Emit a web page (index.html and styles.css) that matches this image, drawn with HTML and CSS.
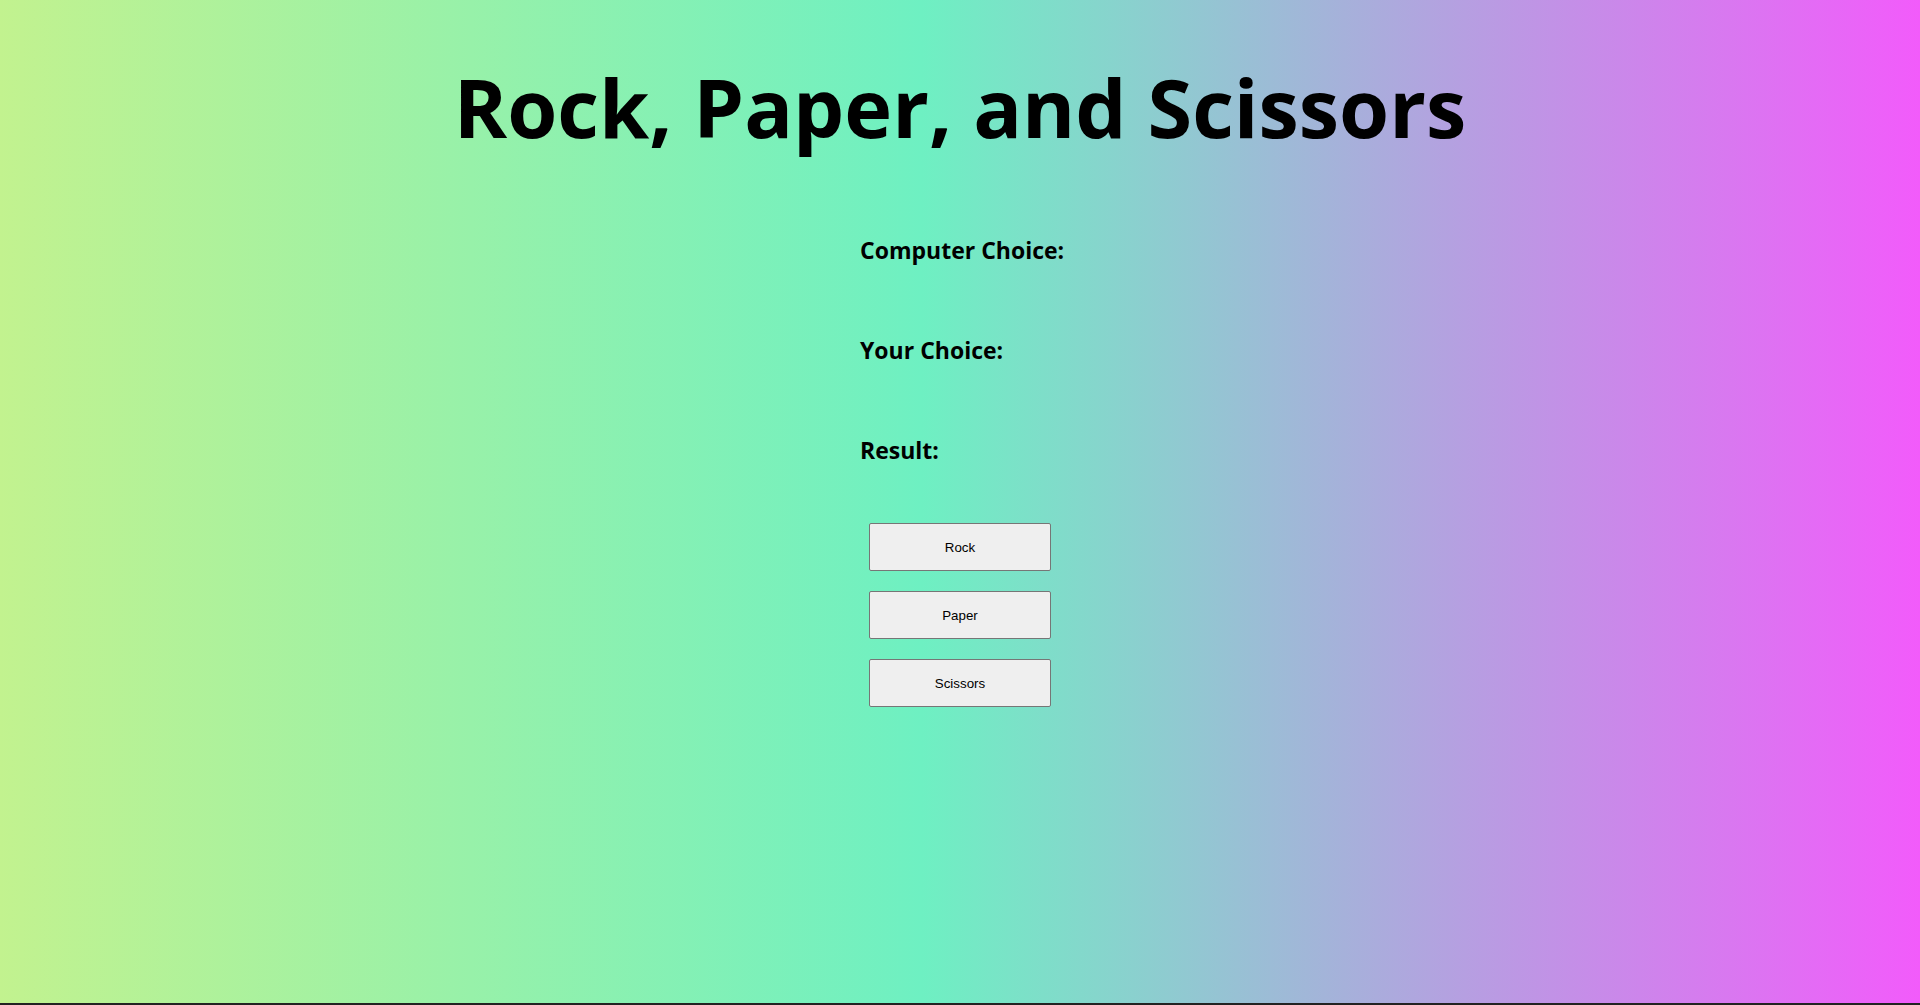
FILE: index.html
```html
<!DOCTYPE html>
<html lang="en">
<head>
<meta charset="utf-8">
<title>Rock, Paper, and Scissors</title>
<link rel="stylesheet" href="styles.css">
</head>
<body>
<main class="page">
  <h1 class="title">Rock, Paper, and Scissors</h1>
  <section class="board">
    <h2 class="label">Computer Choice: <span class="value"></span></h2>
    <h2 class="label">Your Choice: <span class="value"></span></h2>
    <h2 class="label">Result: <span class="value"></span></h2>
    <div class="buttons">
      <button class="btn" type="button">Rock</button>
      <button class="btn" type="button">Paper</button>
      <button class="btn" type="button">Scissors</button>
    </div>
  </section>
</main>
</body>
</html>
```

FILE: styles.css
```css
html {
  background: #222222;
  margin: 0;
  padding: 0;
}
body {
  margin: 0;
  height: 1003px;
  overflow: hidden;
  background: linear-gradient(to right, #c2f28f 0%, #6ef0c2 48%, #f25bfb 100%);
}
.page {
  display: flex;
  flex-direction: column;
  align-items: center;
}
.title {
  font-family: "Comic Sans MS", "Open Sans", sans-serif;
  font-weight: 700;
  font-size: 81px;
  line-height: 1;
  margin: 66px 0 0 0;
  color: #000;
  white-space: nowrap;
}
.board {
  width: 200px;
  margin-top: 88px;
  display: flex;
  flex-direction: column;
}
.label {
  font-family: "Comic Sans MS", "Open Sans", sans-serif;
  font-weight: 700;
  font-size: 23px;
  line-height: 30px;
  margin: 0 0 70px 0;
  color: #000;
  white-space: nowrap;
}
.buttons {
  display: flex;
  flex-direction: column;
  align-items: center;
  gap: 20px;
  margin-top: -12px;
}
.btn {
  width: 182px;
  height: 48px;
  font-family: "Liberation Sans", Arial, sans-serif;
  font-size: 13.333px;
  color: #000;
  background: #efefef;
  border: 1px solid #767676;
  border-radius: 2px;
  padding: 0;
}
```
